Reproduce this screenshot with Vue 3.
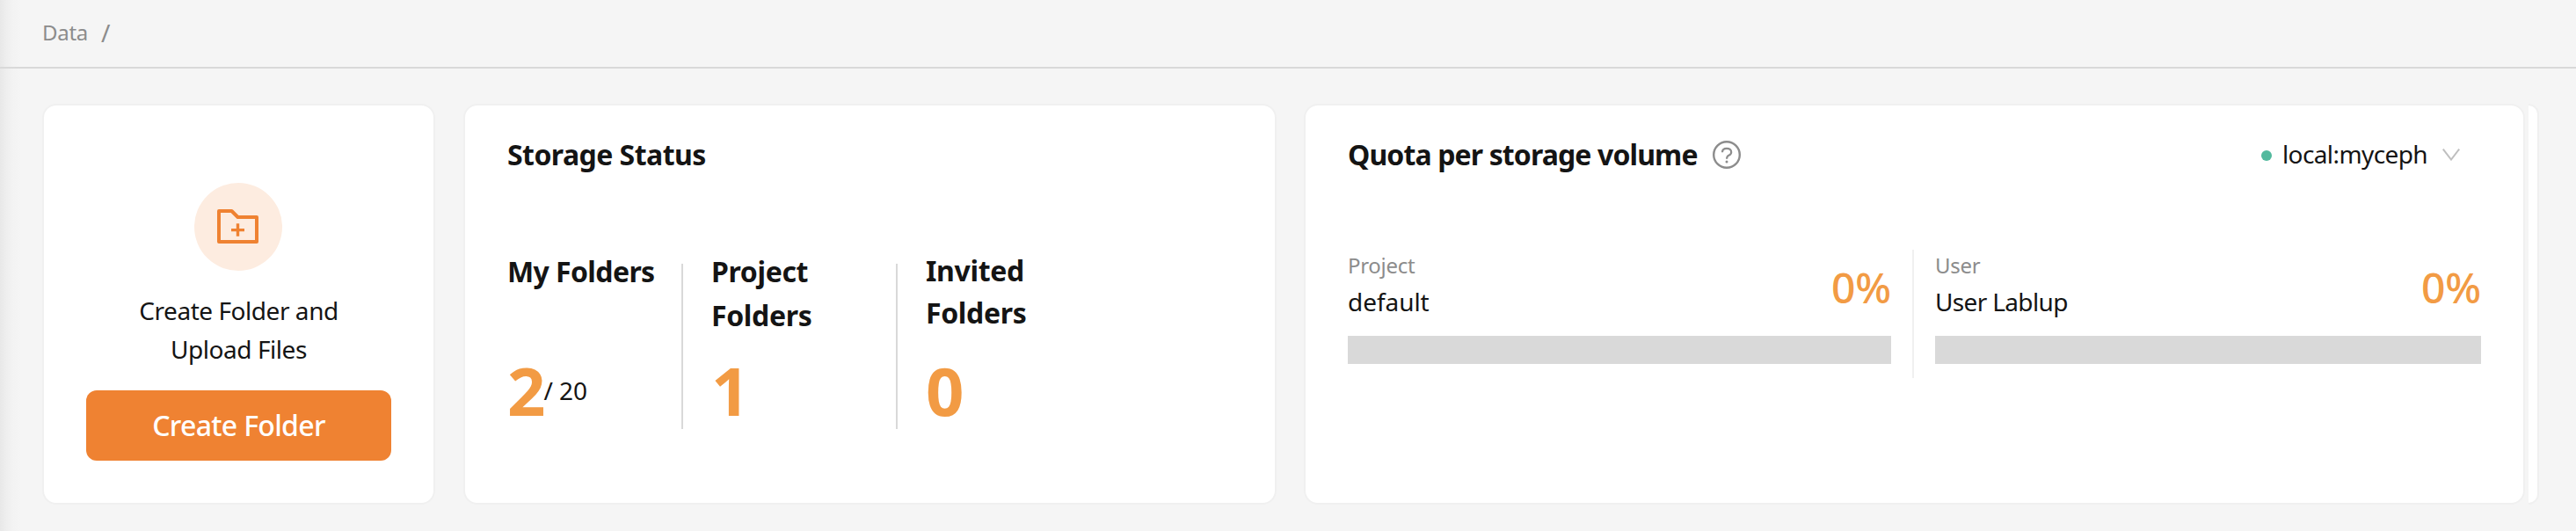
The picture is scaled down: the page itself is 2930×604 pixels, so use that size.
<script setup>
const counts = [
  { label: 'My Folders', value: 2, limit: '/ 20', cls: 'first' },
  { label: 'Project Folders', value: 1, cls: 'second' },
  { label: 'Invited Folders', value: 0, cls: 'third' },
]
const quotas = [
  { kind: 'Project', name: 'default', percent: 0, cls: 'project' },
  { kind: 'User', name: 'User Lablup', percent: 0, cls: 'user' },
]
</script>

<template>
  <div class="page">
    <header class="breadcrumb"><span>Data</span><span class="slash">/</span></header>
    <main class="board">
      <section class="card create">
        <div class="badge">
          <svg width="100" height="100" viewBox="0 0 100 100" fill="none" stroke="#ef8232">
            <path d="M28 32H42.5L49.5 39H71V67H28Z" stroke-width="4" stroke-linejoin="round" />
            <path d="M42 53.6H57M49.5 46.3V60.8" stroke-width="3.4" />
          </svg>
        </div>
        <p class="hint">Create Folder and<br />Upload Files</p>
        <button class="primary">Create Folder</button>
      </section>

      <section class="card status">
        <h2>Storage Status</h2>
        <div class="counts">
          <div v-for="c in counts" :key="c.label" class="count" :class="c.cls">
            <h3>{{ c.label }}</h3>
            <div class="value"><b>{{ c.value }}</b><span v-if="c.limit">{{ c.limit }}</span></div>
          </div>
        </div>
      </section>

      <section class="card quota">
        <div class="head">
          <h2>Quota per storage volume</h2>
          <svg class="help" width="32" height="32" viewBox="0 0 32 32" fill="none" stroke="#8c8c8c">
            <circle cx="16" cy="16" r="14.8" stroke-width="2.4" />
            <path d="M11 13.2C11 10.3 13 8.8 16 8.8S21.2 10.5 21.2 13C21.2 15 20 16.1 18.3 16.8C16.7 17.5 16.1 18.3 16.1 20.8" stroke-width="2.2" />
            <circle cx="16" cy="24" r="1.5" fill="#8c8c8c" stroke="none" />
          </svg>
          <div class="select">
            <i class="dot"></i><span>local:myceph</span>
            <svg width="20" height="14" viewBox="0 0 20 14" fill="none" stroke="#bfbfbf" stroke-width="2">
              <path d="M.8 .6L10 12.5L19.2 .6" />
            </svg>
          </div>
        </div>
        <div class="volumes">
          <div v-for="q in quotas" :key="q.kind" class="volume" :class="q.cls">
            <div class="meta">
              <div><div class="kind">{{ q.kind }}</div><div class="name">{{ q.name }}</div></div>
              <div class="percent">{{ q.percent }}%</div>
            </div>
            <div class="bar"></div>
          </div>
        </div>
      </section>

      <div class="card peek"></div>
    </main>
  </div>
</template>

<style>
body { margin: 0; background: #f5f5f5; }
</style>

<style scoped>
* { box-sizing: border-box; }
.page {
  height: 604px;
  overflow: hidden;
  background: linear-gradient(90deg, #e8e8e8 0, #efefef 8px, #f3f3f3 15px, #f5f5f5 24px);
  font-family: "Noto Sans", sans-serif;
  color: #141414;
  white-space: nowrap;
}
.breadcrumb {
  height: 78px;
  border-bottom: 2px solid #d9d9d9;
  padding: 0 0 3px 48px;
  display: flex;
  align-items: center;
  font-size: 24px;
  line-height: 32px;
  color: #8c8c8c;
  letter-spacing: -.3px;
}
.slash { margin-left: 15px; font-size: 28px; }
.board { display: flex; padding: 40px 0 0 48px; }
.card { height: 456px; border: 2px solid #f0f0f0; border-radius: 16px; background: #fff; flex: none; }
h2, h3, p { margin: 0; }
h2, h3 { font-size: 32px; font-weight: 700; }
h2 { line-height: 48px; }
.create { width: 447px; display: flex; flex-direction: column; align-items: center; }
.badge { margin: 88px 2px 0 0; width: 100px; height: 100px; border-radius: 50%; background: #fdece0; }
.badge svg { display: block; }
.hint { margin-top: 23px; text-align: center; font-size: 28px; line-height: 44px; letter-spacing: -.45px; }
.primary {
  margin-top: 25px; width: 347px; height: 80px; padding: 0; border: 0; border-radius: 12px;
  background: #ef8232; color: #fff;
  font: 500 32px/48px "Noto Sans", sans-serif; letter-spacing: -.7px;
}
.status { width: 925px; margin-left: 32px; padding: 32px 0 0 48px; }
.status h2 { letter-spacing: -.55px; }
.counts { display: flex; margin-top: 84px; }
.count { height: 204px; display: flex; flex-direction: column; justify-content: space-between; position: relative; }
.first { width: 198px; }
.second { width: 244px; padding-left: 34px; }
.third { width: 240px; padding-left: 34px; }
.count + .count::before { content: ""; position: absolute; left: 0; top: 16px; width: 2px; height: 188px; background: #d9d9d9; }
h3 { line-height: 50px; letter-spacing: -.35px; width: 135px; white-space: normal; }
.first h3 { width: auto; white-space: nowrap; letter-spacing: -.6px; }
.third h3 { line-height: 48px; }
.value { display: flex; align-items: center; line-height: 88px; height: 88px; }
.value b { font-size: 76px; color: #f29b44; letter-spacing: -2px; }
.value span { font-size: 28px; letter-spacing: -.1px; }
.quota { width: 1389px; margin-left: 31px; padding: 32px 48px 0; }
.quota h2 { letter-spacing: -.88px; }
.head { display: flex; align-items: center; height: 48px; }
.help { margin-left: 17px; }
.select { margin: 0 24px 0 auto; display: flex; align-items: center; font-size: 28px; line-height: 48px; letter-spacing: -.6px; }
.select span { position: relative; top: -1px; }
.dot { width: 12px; height: 12px; border-radius: 50%; background: #52b99d; margin: 2px 12px 0 0; }
.select svg { margin-left: 17px; }
.volumes { display: flex; margin-top: 84px; height: 146px; }
.project { width: 642px; padding-right: 24px; }
.user { width: 647px; border-left: 2px solid #f0f0f0; padding-left: 24px; }
.meta { display: flex; justify-content: space-between; height: 98px; }
.kind { font-size: 24px; line-height: 44px; margin-top: -4px; height: 41px; color: #8c8c8c; letter-spacing: -.3px; }
.name { font-size: 28px; line-height: 44px; }
.project .name { letter-spacing: -.05px; }
.user .name { letter-spacing: -.65px; }
.percent { font-size: 48px; font-weight: 500; line-height: 72px; margin-top: 7px; color: #f29b44; letter-spacing: -.2px; }
.bar { height: 32px; background: #d9d9d9; }
.peek { width: 12px; margin-left: 4px; border-width: 2px 2px 2px 0; border-radius: 0 16px 16px 0; }
</style>
